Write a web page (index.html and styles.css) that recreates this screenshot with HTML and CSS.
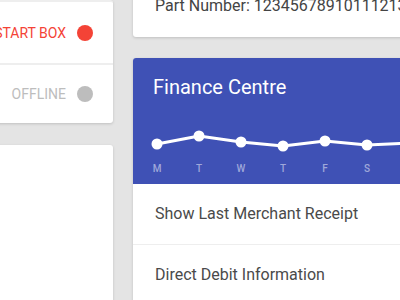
FILE: index.html
```html
<!DOCTYPE html>
<html lang="en">

<head>
    <meta charset="UTF-8">
    <meta name="viewport" content="width=device-width, initial-scale=1.0">
    <title>Dashboard</title>
    <link rel="stylesheet" href="styles.css">
</head>

<body>
    <div class="dashboard">
        <div class="column left">
            <div class="card status-card">
                <div class="status-row">
                    <span class="status-label red">Start Box</span>
                    <span class="dot red-dot"></span>
                </div>
                <div class="status-row">
                    <span class="status-label grey">Offline</span>
                    <span class="dot grey-dot"></span>
                </div>
            </div>
            <div class="card blank-card"></div>
        </div>

        <div class="column right">
            <div class="card part-card">
                <p>Part Number: 12345678910111213</p>
            </div>

            <div class="card finance-card">
                <div class="finance-head">
                    <h2>Finance Centre</h2>
                    <svg class="chart" width="300" height="30" viewBox="0 0 300 30">
                        <polyline points="21,16 63,8 105,14 147,18 189,13 231,17 273,15 315,14"
                            fill="none" stroke="#fff" stroke-width="3" stroke-linejoin="round" />
                        <circle cx="21" cy="16" r="5.5" fill="#fff" />
                        <circle cx="63" cy="8" r="5.5" fill="#fff" />
                        <circle cx="105" cy="14" r="5.5" fill="#fff" />
                        <circle cx="147" cy="18" r="5.5" fill="#fff" />
                        <circle cx="189" cy="13" r="5.5" fill="#fff" />
                        <circle cx="231" cy="17" r="5.5" fill="#fff" />
                        <circle cx="273" cy="15" r="5.5" fill="#fff" />
                    </svg>
                    <div class="days">
                        <span>M</span>
                        <span>T</span>
                        <span>W</span>
                        <span>T</span>
                        <span>F</span>
                        <span>S</span>
                    </div>
                </div>
                <div class="menu-row">Show Last Merchant Receipt</div>
                <div class="menu-row">Direct Debit Information</div>
            </div>
        </div>
    </div>
</body>

</html>
```

FILE: styles.css
```css
* {
    box-sizing: border-box;
    margin: 0;
    padding: 0;
    font-family: Roboto, 'Liberation Sans', sans-serif;
}

body {
    background-color: #e4e4e4;
    color: #444;
    overflow: hidden;
}

.dashboard {
    display: flex;
    gap: 20px;
    margin-left: -87px;
}

.column {
    display: flex;
    flex-direction: column;
}

.left {
    width: 200px;
    flex-shrink: 0;
    gap: 22px;
}

.right {
    width: 320px;
    flex-shrink: 0;
    gap: 21px;
    margin-top: -24px;
}

.card {
    background: #fff;
    border-radius: 3px;
    box-shadow: 0 1px 3px rgba(0, 0, 0, 0.16);
}

/* status card */
.status-card {
    border-top: 2px solid #eee;
}

.status-row {
    display: flex;
    align-items: center;
    justify-content: flex-end;
    gap: 11px;
    height: 61px;
    padding: 0 20px;
}

.status-row + .status-row {
    border-top: 2px solid #eee;
    height: 60px;
}

.status-label {
    font-size: 14px;
    text-transform: uppercase;
    white-space: nowrap;
}

.red {
    color: #f44336;
}

.grey {
    color: #bdbdbd;
}

.dot {
    width: 16px;
    height: 16px;
    flex-shrink: 0;
    border-radius: 50%;
}

.red-dot {
    background: #f44336;
}

.grey-dot {
    background: #bdbdbd;
}

.blank-card {
    height: 200px;
}

/* part number */
.part-card {
    padding: 20px 22px 21px;
    font-size: 16px;
    line-height: 20px;
    white-space: nowrap;
}

/* finance */
.finance-card {
    overflow: hidden;
}

.finance-head {
    background: #3f51b5;
    padding: 17px 0 0;
    height: 126px;
}

.finance-head h2 {
    color: #fff;
    font-size: 20px;
    font-weight: 400;
    line-height: 24px;
    padding: 0 20px;
}

.chart {
    display: block;
    margin: 29px 0 0 3px;
}

.days {
    display: flex;
    padding-left: 3px;
    margin-top: 5px;
}

.days span {
    width: 42px;
    flex-shrink: 0;
    text-align: center;
    font-size: 10px;
    font-weight: 500;
    line-height: 12px;
    color: #9fa8da;
}

.menu-row {
    padding: 20px 22px;
    font-size: 16px;
    line-height: 20px;
    color: #4a4a4a;
    border-bottom: 1px solid #eee;
}
```
